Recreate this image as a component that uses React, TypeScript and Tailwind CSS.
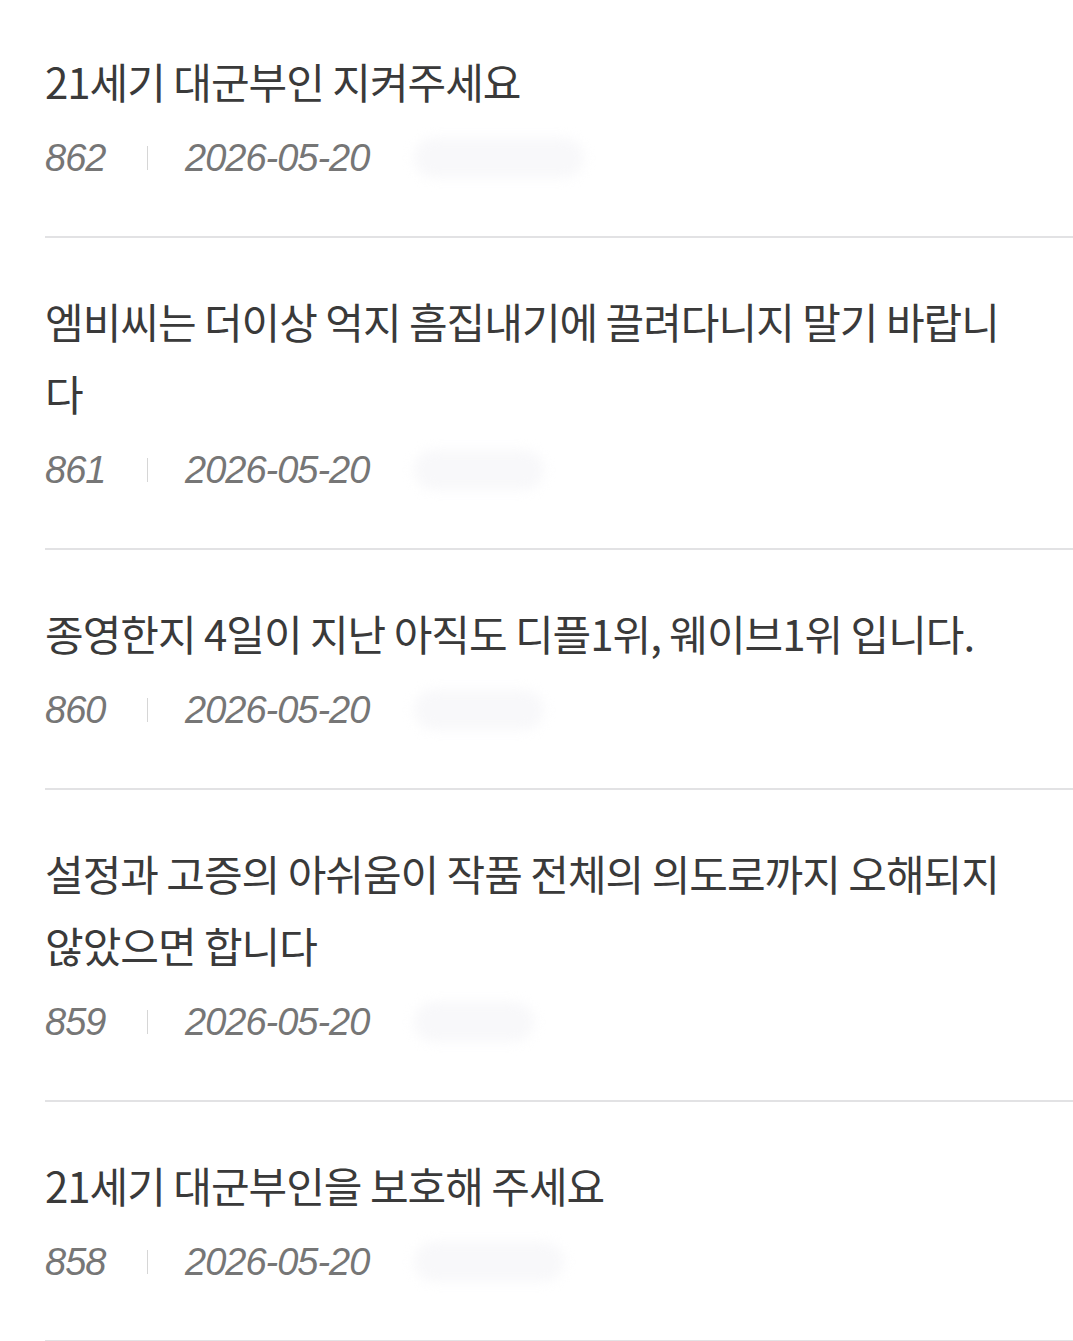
import React from 'react';

interface Post {
  id: number;
  title: string;
  date: string;
  authorWidth: number;
}

const posts: Post[] = [
  { id: 862, title: '21세기 대군부인 지켜주세요', date: '2026-05-20', authorWidth: 170 },
  { id: 861, title: '엠비씨는 더이상 억지 흠집내기에 끌려다니지 말기 바랍니다', date: '2026-05-20', authorWidth: 130 },
  { id: 860, title: '종영한지 4일이 지난 아직도 디플1위, 웨이브1위 입니다.', date: '2026-05-20', authorWidth: 130 },
  { id: 859, title: '설정과 고증의 아쉬움이 작품 전체의 의도로까지 오해되지 않았으면 합니다', date: '2026-05-20', authorWidth: 120 },
  { id: 858, title: '21세기 대군부인을 보호해 주세요', date: '2026-05-20', authorWidth: 150 },
];

const PostRow: React.FC<{ post: Post; first: boolean }> = ({ post, first }) => (
  <li
    className={`ml-[45px] border-b-2 border-[#e2e2e4] pr-[45px] pb-[54px] ${first ? 'pt-[45px]' : 'pt-[47px]'}`}
  >
    <p
      className="text-[42px] leading-[72px] tracking-[-1px] text-[#3a3a3a]"
      style={{ fontFamily: '"Noto Sans CJK KR", "Noto Sans", sans-serif' }}
    >
      {post.title}
    </p>
    <div
      className="mt-[17px] flex h-[48px] items-center text-[38px] italic tracking-[-1px] text-[#767676]"
      style={{ fontFamily: '"Liberation Sans", Arial, sans-serif' }}
    >
      <span className="w-[102px]">{post.id}</span>
      <span className="h-[24px] w-px bg-[#d6d6d6]" />
      <span className="ml-[37px]">{post.date}</span>
      {/* author name, hidden */}
      <span
        className="ml-[45px] h-[40px] rounded-full bg-[#f8f8fa] blur-[6px]"
        style={{ width: post.authorWidth }}
      />
    </div>
  </li>
);

const App: React.FC = () => (
  <div className="min-h-[1341px] w-[1073px] bg-white">
    <ul>
      {posts.map((post, i) => (
        <PostRow key={post.id} post={post} first={i === 0} />
      ))}
    </ul>
  </div>
);

export default App;
